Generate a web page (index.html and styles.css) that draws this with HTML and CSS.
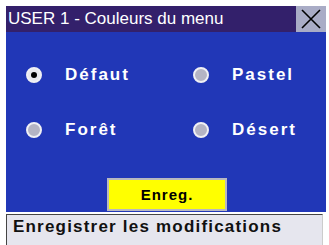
FILE: index.html
```html
<!DOCTYPE html>
<html>
<head>
<meta charset="utf-8">
<link rel="stylesheet" href="styles.css">
</head>
<body>
<div class="screen">
  <div class="titlebar">
    <div class="title">USER 1 - Couleurs du menu</div>
    <div class="close">
      <svg width="22" height="22" viewBox="0 0 22 22"><path d="M2 2 L20 20 M20 2 L2 20" stroke="#000" stroke-width="1.6" fill="none"/></svg>
    </div>
  </div>
  <div class="body">
    <div class="options">
      <div class="opt"><span class="radio on"></span><span class="label">Défaut</span></div>
      <div class="opt"><span class="radio"></span><span class="label">Pastel</span></div>
      <div class="opt"><span class="radio"></span><span class="label">Forêt</span></div>
      <div class="opt"><span class="radio"></span><span class="label">Désert</span></div>
    </div>
    <div class="btnrow"><div class="btn">Enreg.</div></div>
  </div>
  <div class="status">Enregistrer les modifications</div>
</div>
</body>
</html>
```
FILE: styles.css
```css
html, body { margin: 0; padding: 0; background: #fff; }
body { font-family: "Liberation Sans", Arial, sans-serif; width: 329px; height: 245px; overflow: hidden; }
.screen { margin: 6px 3px 0 6px; display: flex; flex-direction: column; }
.titlebar { display: flex; height: 26px; background: #33206b; }
.title { flex: 1; color: #fff; font-size: 17px; line-height: 26px; padding-left: 2px; }
.close { width: 30px; background: #a9acc6; display: flex; align-items: center; justify-content: center; }
.body { background: #2137b7; height: 180px; display: flex; flex-direction: column; }
.options { display: grid; grid-template-columns: 167px 1fr; grid-auto-rows: 55px; padding: 15px 0 0 20px; }
.opt { display: flex; align-items: center; }
.radio { width: 12px; height: 12px; border-radius: 50%; background: #b4b4c4; border: 2px solid #f0f0f4; position: relative; flex: none; }
.radio.on { background: #e8e8ee; }
.radio.on::after { content: ""; position: absolute; left: 3px; top: 3px; width: 6px; height: 6px; border-radius: 50%; background: #000; }
.label { color: #fff; font-weight: bold; font-size: 17px; letter-spacing: 2px; margin-left: 23px; line-height: 18px; }
.btnrow { display: flex; padding-left: 101px; margin-top: 21px; }
.btn { width: 116px; height: 29px; background: #ffff00; border: 2px solid #b8b8c0; font-weight: bold; font-size: 15px; letter-spacing: 1px; line-height: 29px; text-align: center; color: #000; }
.status { margin: 2px 3px 0 0; height: 31px; background: #e6e6ee; border: 1px solid #444; border-right-color: #ccc; border-bottom: none; font-size: 17px; letter-spacing: 1.2px; line-height: 24px; padding-left: 6px; color: #111; font-weight: bold; }
```
